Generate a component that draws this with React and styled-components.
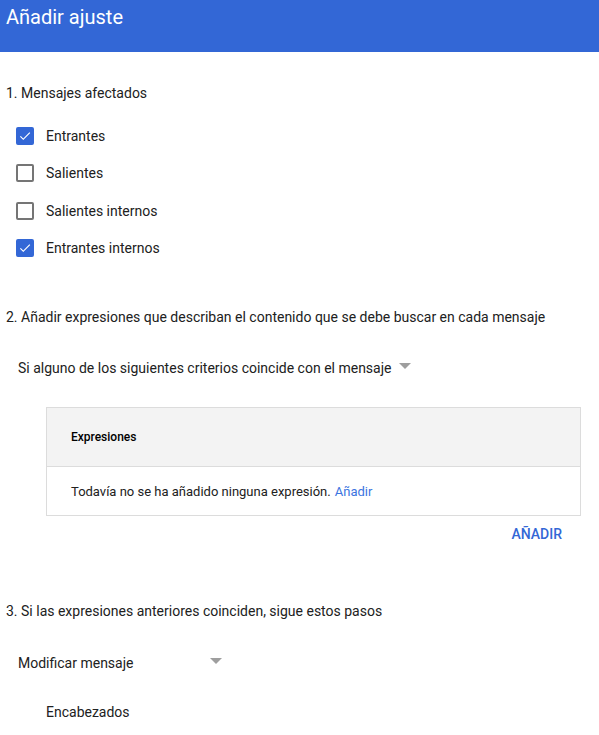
import React from 'react';
import styled, { createGlobalStyle } from 'styled-components';

const GlobalStyle = createGlobalStyle`
  html, body {
    margin: 0;
    padding: 0;
    background: #ffffff;
  }
  body {
    font-family: Roboto, "Liberation Sans", Arial, sans-serif;
    color: #212121;
  }
`;

const Page = styled.div`
  width: 599px;
  min-height: 735px;
  overflow: hidden;
`;

const Header = styled.header`
  height: 52px;
  background: #3367d6;
  padding: 1px 6px 0;
  box-sizing: border-box;
`;

const Title = styled.h1`
  margin: 0;
  font-size: 20px;
  font-weight: 400;
  line-height: 32px;
  color: #ffffff;
`;

const StepTitle = styled.div`
  margin: ${({ $top }) => $top}px 0 0 6px;
  font-size: 14px;
  line-height: 20px;
`;

const CheckList = styled.div`
  margin-top: 14px;
  display: flex;
  flex-direction: column;
`;

const CheckRow = styled.label`
  height: 37.5px;
  display: flex;
  align-items: center;
  gap: 12px;
  padding-left: 16px;
  font-size: 14px;
`;

const Box = styled.span`
  width: 18px;
  height: 18px;
  box-sizing: border-box;
  border-radius: 2px;
  display: flex;
  align-items: center;
  justify-content: center;
  background: ${({ $checked }) => ($checked ? '#3367d6' : '#ffffff')};
  border: 2px solid ${({ $checked }) => ($checked ? '#3367d6' : '#757575')};
`;

const Select = styled.div`
  margin: ${({ $top }) => $top}px 0 0 18px;
  width: ${({ $width }) => ($width ? `${$width}px` : 'auto')};
  display: flex;
  align-items: center;
  justify-content: ${({ $width }) => ($width ? 'space-between' : 'flex-start')};
  gap: 8px;
  font-size: 14px;
  line-height: 20px;
`;

const Arrow = styled.span`
  width: 0;
  height: 0;
  margin-top: -5px;
  border-left: 6px solid transparent;
  border-right: 6px solid transparent;
  border-top: 6px solid #9e9e9e;
`;

const Table = styled.div`
  margin: 29px 18px 0 46px;
  border: 1px solid #dcdcdc;
`;

const TableHead = styled.div`
  height: 58px;
  background: #f3f3f3;
  border-bottom: 1px solid #dcdcdc;
  display: flex;
  align-items: center;
  padding-left: 24px;
  font-size: 12px;
  font-weight: 500;
  color: #000000;
`;

const TableBody = styled.div`
  height: 48px;
  display: flex;
  align-items: center;
  padding-left: 24px;
  font-size: 13px;
  color: #212121;
`;

const Link = styled.a`
  color: #3b74e0;
  margin-left: 4px;
  text-decoration: none;
`;

const Actions = styled.div`
  display: flex;
  justify-content: flex-end;
  padding-right: 37px;
  margin-top: 8px;
`;

const TextButton = styled.button`
  border: 0;
  background: none;
  padding: 0;
  font-family: inherit;
  font-size: 14px;
  font-weight: 500;
  line-height: 20px;
  color: #3367d6;
  cursor: pointer;
`;

const SubItem = styled.div`
  margin: 29px 0 0 46px;
  font-size: 14px;
  line-height: 20px;
`;

const Check = () => (
  <svg width="14" height="14" viewBox="0 0 24 24">
    <path d="M9 16.2L4.8 12l-1.4 1.4L9 19 21 7l-1.4-1.4L9 16.2z" fill="#ffffff" />
  </svg>
);

const options = [
  { label: 'Entrantes', checked: true },
  { label: 'Salientes', checked: false },
  { label: 'Salientes internos', checked: false },
  { label: 'Entrantes internos', checked: true },
];

export default function App() {
  return (
    <Page>
      <GlobalStyle />
      <Header>
        <Title>Añadir ajuste</Title>
      </Header>

      <StepTitle $top={31}>1. Mensajes afectados</StepTitle>
      <CheckList>
        {options.map((o) => (
          <CheckRow key={o.label}>
            <Box $checked={o.checked}>{o.checked && <Check />}</Box>
            {o.label}
          </CheckRow>
        ))}
      </CheckList>

      <StepTitle $top={40}>
        2. Añadir expresiones que describan el contenido que se debe buscar en cada mensaje
      </StepTitle>
      <Select $top={31}>
        Si alguno de los siguientes criterios coincide con el mensaje
        <Arrow />
      </Select>

      <Table>
        <TableHead>Expresiones</TableHead>
        <TableBody>
          Todavía no se ha añadido ninguna expresión.<Link href="#">Añadir</Link>
        </TableBody>
      </Table>
      <Actions>
        <TextButton>AÑADIR</TextButton>
      </Actions>

      <StepTitle $top={57}>3. Si las expresiones anteriores coinciden, sigue estos pasos</StepTitle>
      <Select $top={32} $width={204}>
        Modificar mensaje
        <Arrow />
      </Select>
      <SubItem>Encabezados</SubItem>
    </Page>
  );
}
